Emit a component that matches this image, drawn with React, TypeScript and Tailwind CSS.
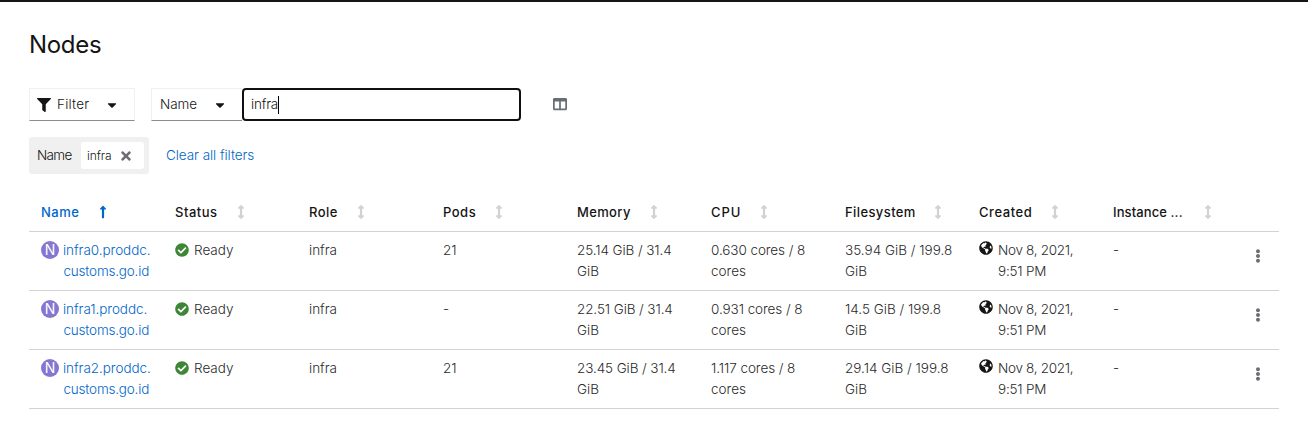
import type { ReactNode } from "react";
import {
  FaArrowsAltV,
  FaCaretDown,
  FaCheckCircle,
  FaColumns,
  FaEllipsisV,
  FaFilter,
  FaGlobeAmericas,
  FaLongArrowAltUp,
  FaTimes,
} from "react-icons/fa";

const columns = [
  { label: "Name", width: "w-[55px]", tracking: "tracking-[0.5px]", active: true },
  { label: "Status", width: "w-[59px]", tracking: "tracking-[0.5px]" },
  { label: "Role", width: "w-[45px]", tracking: "tracking-[0.5px]" },
  { label: "Pods", width: "w-[49px]", tracking: "tracking-[0.5px]" },
  { label: "Memory", width: "w-[70px]", tracking: "tracking-[0.35px]" },
  { label: "CPU", width: "w-[46px]", tracking: "tracking-[0.9px]" },
  { label: "Filesystem", width: "w-[86px]", tracking: "tracking-[0.4px]" },
  { label: "Created", width: "w-[69px]", tracking: "tracking-[0.55px]" },
  { label: "Instance ...", width: "w-[88px]", tracking: "tracking-[0.1px]" },
];

const nodes = [
  { name: "infra0", pods: "21", memory: "25.14 GiB / 31.4", cpu: "0.630 cores / 8", fs: "35.94 GiB / 199.8" },
  { name: "infra1", pods: "-", memory: "22.51 GiB / 31.4", cpu: "0.931 cores / 8", fs: "14.5 GiB / 199.8" },
  { name: "infra2", pods: "21", memory: "23.45 GiB / 31.4", cpu: "1.117 cores / 8", fs: "29.14 GiB / 199.8" },
];

const grid = "grid grid-cols-[repeat(9,134px)_1fr] border-b border-[#d2d2d2] pl-3";

function Cell({ children }: { children: ReactNode }) {
  return <div className="whitespace-nowrap">{children}</div>;
}

export default function App() {
  return (
    <div className="h-[438px] w-[1308px] overflow-hidden border-t-2 border-[#151515] bg-white px-[29px] font-['Inter',sans-serif] text-[13.5px] leading-[21px] font-light text-[#151515]">
      <h1 className="mt-[27px] h-8 text-[24px] leading-8 font-normal tracking-[-0.3px]">Nodes</h1>

      <div className="mt-[27px] flex h-[33px]">
        <button className="flex w-[106px] items-center border border-[#f0f0f0] border-b-[#8a8d90] pl-[7px]">
          <FaFilter size={14} />
          <span className="ml-[6px] w-[50px] text-left tracking-[0.2px]">Filter</span>
          <FaCaretDown size={14} className="ml-[-2px]" />
        </button>
        <button className="ml-4 flex w-[91px] items-center border border-r-0 border-[#f0f0f0] border-b-[#8a8d90] pl-2">
          <span className="w-[53px] text-left tracking-[-0.1px]">Name</span>
          <FaCaretDown size={14} />
        </button>
        <div className="flex w-[279px] items-center rounded-[4px] border-2 border-[#101010] pl-[7px]">
          <span className="w-[27px] tracking-[-0.2px]">infra</span>
          <span className="h-[18px] w-px bg-black" />
        </div>
        <FaColumns size={14} className="mt-[9px] ml-8 text-[#6a6e73]" />
      </div>

      <div className="mt-4 flex h-[37px] items-center">
        <div className="flex h-[37px] w-[120px] items-center rounded-[3px] bg-[#f0f0f0] pl-2">
          <span className="w-[44px] tracking-[-0.65px]">Name</span>
          <div className="flex h-[27px] w-[63px] items-center rounded-[3px] bg-white pl-[6px] text-[12px]">
            <span className="w-[32px] tracking-[-0.1px]">infra</span>
            <FaTimes size={14} className="text-[#6a6e73]" />
          </div>
        </div>
        <span className="ml-[17px] tracking-[-0.06px] text-[#0066cc]">Clear all filters</span>
      </div>

      <div className="mt-[18px] w-[1250px]">
        <div className={`${grid} h-10 items-center text-[13px] font-medium`}>
          {columns.map((c) => (
            <div key={c.label} className={`flex items-center whitespace-nowrap ${c.active ? "text-[#0066cc]" : ""}`}>
              <span className={`mt-[2px] ${c.width} ${c.tracking}`}>{c.label}</span>
              {c.active ? <FaLongArrowAltUp size={14} /> : <FaArrowsAltV size={14} className="text-[#d2d2d2]" />}
            </div>
          ))}
        </div>
        {nodes.map((n) => (
          <div key={n.name} className={`${grid} h-[59px] pt-2 text-[#2b2b2b]`}>
            <div className="flex whitespace-nowrap text-[#0066cc]">
              <span className="mt-px mr-1 flex size-[18px] items-center justify-center rounded-full bg-[#8476d1] text-[14px] leading-none font-normal text-white">N</span>
              <span>
                <span className="tracking-[-0.05px]">{n.name}.proddc.</span>
                <br />
                <span className="ml-[0.5px] tracking-[-0.2px]">customs.go.id</span>
              </span>
            </div>
            <div className="flex whitespace-nowrap">
              <FaCheckCircle size={14} className="mt-[3px] mr-[5px] text-[#3e8635]" />
              Ready
            </div>
            <Cell>infra</Cell>
            <Cell>{n.pods}</Cell>
            <Cell>
              <span className="tracking-[-0.1px]">{n.memory}</span>
              <br />GiB
            </Cell>
            <Cell>
              <span className="tracking-[-0.08px]">{n.cpu}</span>
              <br />cores
            </Cell>
            <Cell>{n.fs}<br />GiB</Cell>
            <div className="flex whitespace-nowrap">
              <FaGlobeAmericas size={14} className="mt-px mr-[5px] text-[#151515]" />
              <span>
                <span className="tracking-[-0.3px]">Nov 8, 2021,</span>
                <br />
                <span className="tracking-[-0.2px]">9:51 PM</span>
              </span>
            </div>
            <Cell>-</Cell>
            <FaEllipsisV size={14} className="mt-[9px] ml-1 text-[#6a6e73]" />
          </div>
        ))}
      </div>
    </div>
  );
}
